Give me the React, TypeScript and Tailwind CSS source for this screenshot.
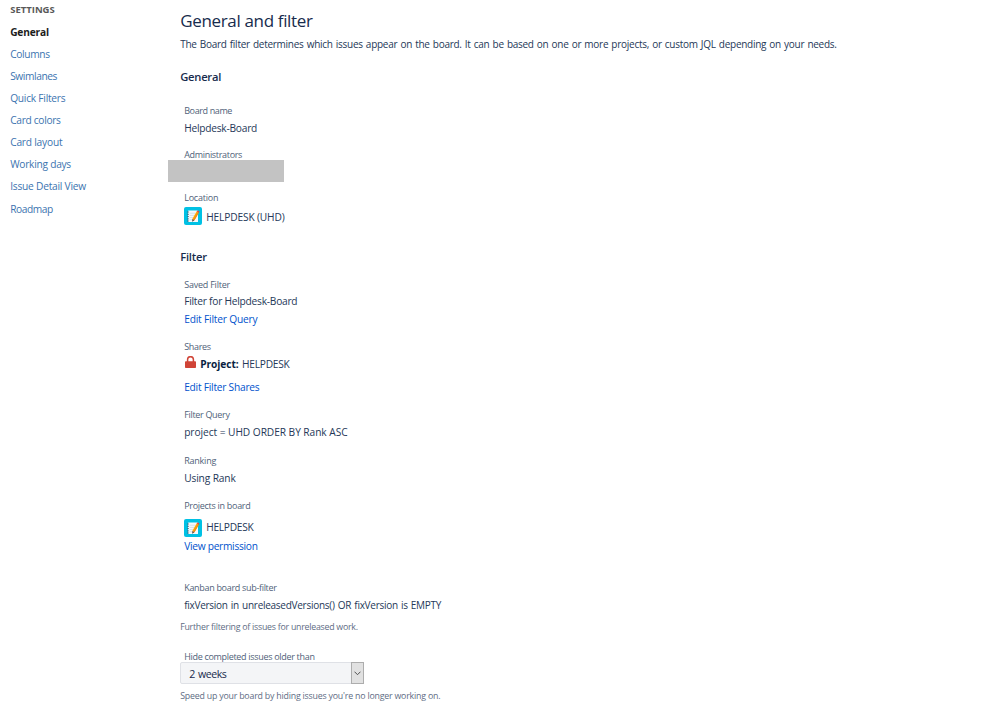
import type { ReactNode } from "react";

const NAV = [
  { label: "General", active: true, track: "tracking-[-0.19px]" },
  { label: "Columns", track: "tracking-[-0.33px]" },
  { label: "Swimlanes", track: "tracking-[-0.42px]" },
  { label: "Quick Filters", track: "tracking-[-0.25px]" },
  { label: "Card colors", track: "tracking-[-0.31px]" },
  { label: "Card layout", track: "tracking-[-0.21px]" },
  { label: "Working days", track: "tracking-[-0.26px]" },
  { label: "Issue Detail View", track: "tracking-[-0.23px]" },
  { label: "Roadmap", track: "tracking-[-0.42px]" },
];

type TextProps = { children: ReactNode; className?: string };

function Label({ children, className = "" }: TextProps) {
  return (
    <div className={`ml-1 text-[9px] leading-[14px] font-medium text-[#505f79] ${className}`}>
      <span>{children}</span>
    </div>
  );
}

function Value({ children, className = "" }: TextProps) {
  return (
    <div className={`ml-1 text-[10.2px] leading-4 text-[#253858] ${className}`}>
      <span>{children}</span>
    </div>
  );
}

function EditLink({ children, className = "" }: TextProps) {
  return (
    <div className={`ml-1 text-[10.2px] leading-4 text-[#0052cc] ${className}`}>
      <a href="#">{children}</a>
    </div>
  );
}

function Help({ children, className = "" }: TextProps) {
  return (
    <p className={`text-[8.8px] leading-[14px] font-medium text-[#5e6c84] ${className}`}>
      <span>{children}</span>
    </p>
  );
}

function ProjectIcon() {
  return (
    <svg width="18" height="18" viewBox="0 0 18 18" className="shrink-0">
      <rect width="18" height="18" rx="2" fill="#00c1e4" />
      <rect x="4" y="3.5" width="10" height="11.5" rx="0.5" fill="#f7f9fb" />
      <path d="M5.5 6.2h6M5.5 8.4h5M5.5 10.6h3.5M5.5 12.8h3" stroke="#c9d3dc" strokeWidth="0.7" />
      <path d="M3 5h2M3 7.3h2M3 9.6h2M3 11.9h2M3 14h2" stroke="#3f5f7a" strokeWidth="0.8" />
      <path d="M12.6 4.6l2.2 1.2-4.3 7.4-2.2-1.2z" fill="#ffab00" />
      <path d="M13.7 5.2l1.1.6-4.3 7.4-1.1-.6z" fill="#f08c1a" />
      <path d="M12.6 4.6l.6-1c.3-.5 2.5.7 2.2 1.2l-.6 1z" fill="#e5493a" />
      <path d="M8.3 12l2.2 1.2-2.3 1.5z" fill="#5a4a42" />
    </svg>
  );
}

function LockIcon() {
  return (
    <svg width="11" height="12" viewBox="0 0 11 12" className="shrink-0">
      <path d="M2.6 6V3.6a2.9 2.9 0 0 1 5.8 0V6" fill="none" stroke="#d04437" strokeWidth="1.5" />
      <rect y="5.2" width="11" height="6.8" rx="0.8" fill="#d04437" />
    </svg>
  );
}

function Sidebar() {
  return (
    <nav className="w-[170px] shrink-0 pt-[3px]">
      <h4 className="text-[9.5px] leading-[14px] font-bold text-[#595959]">
        <span>SETTINGS</span>
      </h4>
      <ul className="mt-[3.6px] text-[10.2px] leading-[22.12px]">
        {NAV.map((item) => (
          <li key={item.label} className={item.track}>
            <a href="#" className={item.active ? "font-bold text-[#1c1c1c]" : "text-[#3b73af]"}>
              {item.label}
            </a>
          </li>
        ))}
      </ul>
    </nav>
  );
}

export default function App() {
  return (
    <div className="flex h-[713px] w-[999px] overflow-hidden bg-white pl-[10.2px] font-['Open_Sans','Noto_Sans',sans-serif]">
      <Sidebar />
      <main className="flex-1 pt-[9px]">
        <h1 className="text-[17px] leading-6 tracking-[-0.34px] text-[#172b4d]">
          <span>General and filter</span>
        </h1>
        <p className="mt-[3px] text-[10px] leading-4 tracking-[-0.27px] text-[#253858] [word-spacing:0.8px]">
          <span>
            The Board filter determines which issues appear on the board. It can be based on one or more projects, or custom JQL depending on your needs.
          </span>
        </p>

        <h2 className="mt-[17px] text-[11.2px] leading-4 font-semibold tracking-[-0.24px] text-[#172b4d]">
          <span>General</span>
        </h2>
        <Label className="mt-[19px] tracking-[-0.38px]">Board name</Label>
        <Value className="mt-[2px] tracking-[-0.24px]">Helpdesk-Board</Value>
        <Label className="mt-[12px] tracking-[-0.32px]">Administrators</Label>
        <div className="-mt-[2px] -ml-[12.5px] h-[22px] w-[116px] bg-[#c3c3c3]" />
        <Label className="mt-[9px] tracking-[-0.22px]">Location</Label>
        <div className="mt-[2px] ml-1 flex items-center">
          <ProjectIcon />
          <Value className="mt-px tracking-[-0.15px]">HELPDESK (UHD)</Value>
        </div>

        <h2 className="mt-[24px] text-[11.2px] leading-4 font-semibold tracking-[-0.2px] text-[#172b4d]">
          <span>Filter</span>
        </h2>
        <Label className="mt-[13px] tracking-[-0.22px]">Saved Filter</Label>
        <Value className="mt-px tracking-[-0.24px]">Filter for Helpdesk-Board</Value>
        <EditLink className="mt-[2px] tracking-[-0.19px]">Edit Filter Query</EditLink>

        <Label className="mt-[13px] tracking-[-0.32px]">Shares</Label>
        <div className="mt-[2px] ml-[5px] flex h-4 items-start">
          <LockIcon />
          <Value className="tracking-[-0.24px]">
            <b className="mr-[1px] tracking-[-0.08px] text-[#091e42]">Project:</b> HELPDESK
          </Value>
        </div>
        <EditLink className="mt-[7px] tracking-[-0.24px]">Edit Filter Shares</EditLink>

        <Label className="mt-[13px] tracking-[-0.32px]">Filter Query</Label>
        <Value className="mt-[2px] tracking-[-0.06px]">project = UHD ORDER BY Rank ASC</Value>
        <Label className="mt-[14px] tracking-[-0.22px]">Ranking</Label>
        <Value className="mt-[2px] tracking-[-0.14px]">Using Rank</Value>

        <Label className="mt-[13px] tracking-[-0.29px]">Projects in board</Label>
        <div className="mt-[6px] ml-1 flex items-center">
          <ProjectIcon />
          <Value className="-mt-[2px] tracking-[-0.28px]">HELPDESK</Value>
        </div>
        <EditLink className="mt-px tracking-[-0.28px]">View permission</EditLink>

        <Label className="mt-[27px] tracking-[-0.31px]">Kanban board sub-filter</Label>
        <Value className="mt-[2px] text-[10px] tracking-[-0.27px] [word-spacing:0.8px]">
          fixVersion in unreleasedVersions() OR fixVersion is EMPTY
        </Value>
        <Help className="mt-[7px] tracking-[-0.25px]">Further filtering of issues for unreleased work.</Help>

        <Label className="mt-[16px] tracking-[-0.31px]">Hide completed issues older than</Label>
        <div className="-mt-[2px] flex h-[22px] w-[184px] justify-between rounded-[2px] border border-[#dfe1e6] bg-[#f4f5f7]">
          <span className="pl-2 text-[10.6px] leading-[22px] tracking-[-0.45px] text-[#172b4d] [word-spacing:0.8px]">
            2 weeks
          </span>
          <span className="-my-px -mr-px flex w-[13px] items-center justify-center border border-[#adadad] bg-[#e1e1e1]">
            <svg width="7" height="5" viewBox="0 0 7 5">
              <path d="M0.5 0.7l3 3 3-3" fill="none" stroke="#505050" />
            </svg>
          </span>
        </div>
        <Help className="mt-[5px] tracking-[-0.2px]">Speed up your board by hiding issues you're no longer working on.</Help>
      </main>
    </div>
  );
}
